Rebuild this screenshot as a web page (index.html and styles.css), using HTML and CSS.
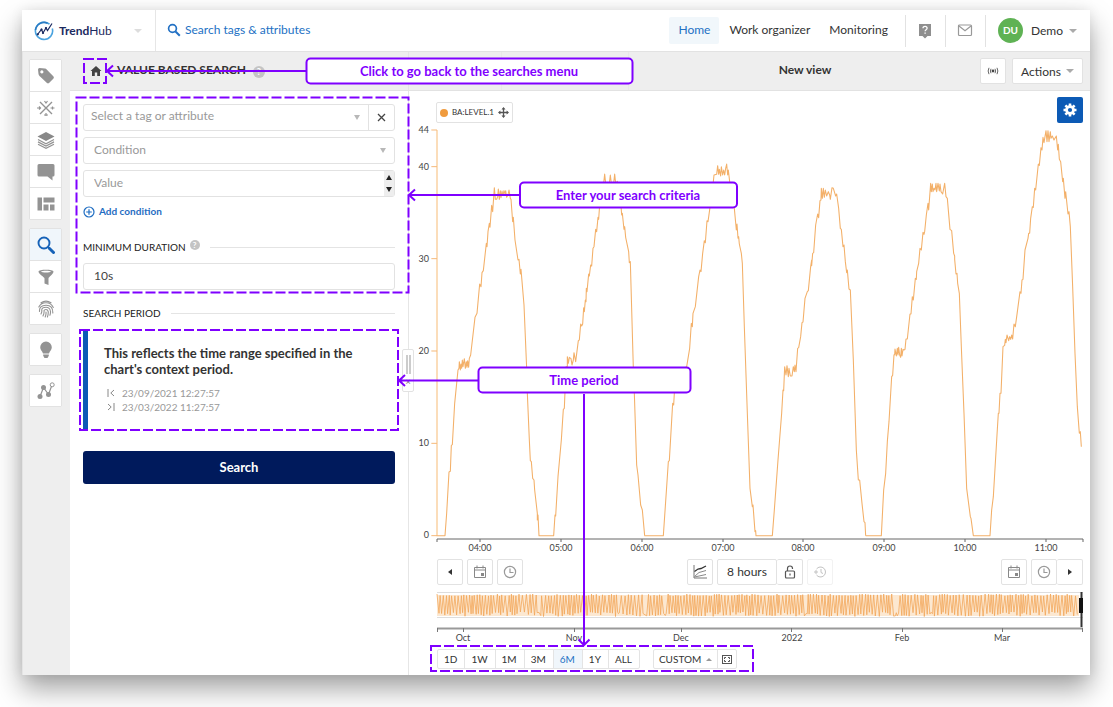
FILE: index.html
```html
<!DOCTYPE html>
<html lang="en">
<head>
<meta charset="utf-8">
<meta name="viewport" content="width=device-width, initial-scale=1">
<title>TrendHub</title>
<link rel="stylesheet" href="styles.css">
</head>
<body>
<div class="app">
  <header class="topbar">
    <button class="brand" type="button">
      <svg width="20" height="20" viewBox="0 0 20 20" fill="none">
        <path d="M15.500 3.200A8.600 8.600 0 1 0 18.300 7.500" stroke="#4aa3df" stroke-width="1.600"/>
        <path d="M1.500 9A8.600 8.600 0 0 1 13.500 2.200" stroke="#2b7cc4" stroke-width="1.600"/>
        <path d="M3.500 13.500L7.500 8.500L9 12L12 7L13.500 9.500L18 2.500" stroke="#1b2a60" stroke-width="1.200"/>
        <circle cx="7.500" cy="8.500" r="1.100" fill="#1b2a60"/><circle cx="12" cy="7" r="1.100" fill="#1b2a60"/><circle cx="9" cy="12" r="1.100" fill="#1b2a60"/><circle cx="3.800" cy="13.300" r="1.100" fill="#1b2a60"/>
      </svg>
      <span class="brand-name"><b>Trend</b>Hub</span>
      <span class="caret caret-light"></span>
    </button>
    <button class="global-search" type="button">
      <svg width="14" height="14" viewBox="0 0 14 14" fill="none" stroke="#2371c4"><circle cx="5.500" cy="5.500" r="3.900" stroke-width="1.700"/><path d="M8.500 8.500L12.800 12.800" stroke-width="2"/></svg>
      Search tags &amp; attributes
    </button>
    <nav class="nav">
      <a class="active" href="#home">Home</a>
      <a href="#organizer">Work organizer</a>
      <a href="#monitoring">Monitoring</a>
    </nav>
    <button class="icon-tab" type="button" aria-label="Help">
      <svg width="14" height="16" viewBox="0 0 14 16"><path d="M1 1h12v12h-3.500L7 15.500l-2.500-2.500H1z" fill="#8f8f8f"/><path d="M5 5.200c0-2.600 4.100-2.500 4.100 0 0 1.600-2 1.500-2 3.100" fill="none" stroke="#fff" stroke-width="1.300"/><path d="M6.400 9.500h1.400v1.300H6.400z" fill="#fff"/></svg>
    </button>
    <button class="icon-tab" type="button" aria-label="Messages">
      <svg width="16" height="13" viewBox="0 0 16 13" fill="none" stroke="#999" stroke-width="1.200"><rect x="1.500" y="1" width="13" height="10.500" rx="1"/><path d="M2 2l6 4.800L14 2"/></svg>
    </button>
    <button class="user" type="button"><span class="avatar">DU</span>Demo<span class="caret"></span></button>
  </header>

  <div class="workspace">
    <aside class="rail">
      <div class="rail-group">
        <button type="button" aria-label="Tags"><svg viewBox="0 0 18 18"><path fill-rule="evenodd" d="M1 2.500Q1 1 2.500 1L8 1.500Q9 1.600 9.700 2.400L16.500 9.500Q17.300 10.500 16.500 11.500L12 16Q11 16.800 10 16L2.500 9Q1.700 8.200 1.500 7zM4.800 3.300a1.600 1.600 0 1 0 .1 0z" fill="#939393"/></svg></button>
        <button type="button" aria-label="Scatter"><svg viewBox="0 0 18 18" fill="none" stroke="#939393" stroke-width="1.400"><path d="M3 3l12 12M15 3L3 15"/><path d="M7.500 2l1.500 2 1.500-2M0 9h4M2 7.500L3.500 9 2 10.500M13.500 9h4M15.500 7.500v3M7 16h4M9 14v3" stroke-width="1.200"/></svg></button>
        <button type="button" aria-label="Layers"><svg viewBox="0 0 18 18"><path d="M9 1l8.500 4.500L9 10 .5 5.500z" fill="#888"/><path d="M1 8.500l8 4.200 8-4.200M1 10.900l8 4.200 8-4.200M1 13.300l8 4 8-4" fill="none" stroke="#939393" stroke-width="1.200"/></svg></button>
        <button type="button" aria-label="Comments"><svg viewBox="0 0 18 18"><path d="M2 1h14q1.500 0 1.500 1.500v9.500q0 1.500-1.500 1.500h-.5v4l-5-4H2Q.5 13.500.5 12V2.500Q.5 1 2 1z" fill="#939393"/></svg></button>
        <button type="button" aria-label="Dashboards"><svg viewBox="0 0 18 18" fill="#939393"><path d="M.5 2.500h4.500v13H.5zM6.500 2.500h11v5h-11zM6.500 9.500h5v6h-5zM13 9.500h4.500v6H13z"/></svg></button>
      </div>
      <div class="rail-group">
        <button class="selected" type="button" aria-label="Search"><svg viewBox="0 0 18 18" fill="none" stroke="#1662b8"><circle cx="7" cy="7" r="5.500" stroke-width="1.900"/><path d="M11 11l2 2" stroke-width="2"/><path d="M12.500 12.500l4 4" stroke-width="3" stroke-linecap="round"/></svg></button>
        <button type="button" aria-label="Filter"><svg viewBox="0 0 18 18"><path fill-rule="evenodd" d="M1.500 3.500C1.500 1 16.500 1 16.500 3.500 16.500 6 11.500 9 11.500 10.500V17l-4-1.500v-5C7.500 9 1.500 6 1.500 3.500zM4 3.500c1 1.300 9 1.300 10 0-1-1-9-1-10 0z" fill="#939393"/></svg></button>
        <button type="button" aria-label="Fingerprint"><svg viewBox="0 0 18 18" fill="none" stroke="#939393" stroke-width="1.100" stroke-linecap="round"><path d="M4 2.800Q9-.5 14 2.800M1.800 7Q4 2.800 9 2.800T16.300 7.500M2.500 11.500Q2 5.300 9 5.200T15.800 13M4 14q1.200-2.300.7-4Q5 7.300 9 7.300t4.500 4.200q.1 2-.6 3.800M6 16q1.400-3 1-5.300Q7.300 9.500 9 9.500t2.200 2q.3 2.500-.8 5.500M9 12q.3 2.300-.8 5"/></svg></button>
      </div>
      <div class="rail-group">
        <button type="button" aria-label="Insights"><svg viewBox="0 0 18 18" fill="#939393"><path d="M9 .5a5.800 5.800 0 0 1 5.800 5.800c0 2.700-2 3.700-2.800 6.200H6C5.200 10 3.200 9 3.200 6.300A5.800 5.800 0 0 1 9 .5zM6.200 13.500h5.600v1.300L10.500 17h-3l-1.300-2.200z"/></svg></button>
      </div>
      <div class="rail-group">
        <button type="button" aria-label="Network"><svg viewBox="0 0 18 18" fill="#939393"><path d="M3 14.500L6.500 5.500 11.500 12.500 15 3" fill="none" stroke="#939393" stroke-width="1.200"/><circle cx="3" cy="14.500" r="2.500"/><circle cx="6.500" cy="5.500" r="2.500"/><circle cx="11.500" cy="12.500" r="2.500"/><circle cx="15.200" cy="2.800" r="2" fill="#fff" stroke="#939393"/></svg></button>
      </div>
    </aside>

    <main class="content">
      <div class="viewbar">
        <div class="viewbar-left">
          <a class="home" href="#searches" aria-label="Back to the searches menu"><svg width="12" height="12" viewBox="0 0 12 12"><path d="M6 1l5.500 5H10v5H7.200V7.500H4.800V11H2V6H.5z" fill="#444"/></svg></a>
          <h1>VALUE BASED SEARCH</h1>
          <span class="help">?</span>
        </div>
        <div class="viewbar-slot"></div>
        <div class="viewbar-slot wide"></div>
        <div class="viewbar-right">
          <h2>New view</h2>
          <button class="box-button" type="button" aria-label="Live"><svg width="12" height="10" viewBox="0 0 12 10" fill="none" stroke="#666"><circle cx="6" cy="5" r="1.400" fill="#444" stroke="none"/><path d="M4 2.800Q2.800 5 4 7.200M2 1.800Q.3 5 2 8.200M8 2.800Q9.200 5 8 7.200M10 1.800Q11.700 5 10 8.200"/></svg></button>
          <button class="box-button actions" type="button">Actions<span class="caret"></span></button>
        </div>
      </div>

      <div class="panes">
        <form class="search-pane">
          <div class="fields">
            <div class="field">
              <select aria-label="Tag or attribute"><option>Select a tag or attribute</option></select>
              <span class="drop"></span>
              <button class="clear" type="button" aria-label="Clear"><svg width="9" height="9" viewBox="0 0 9 9" stroke="#444" stroke-width="1.300"><path d="M1 1l7 7M8 1L1 8"/></svg></button>
            </div>
            <div class="field">
              <select class="inset" aria-label="Condition"><option>Condition</option></select>
              <span class="drop"></span>
            </div>
            <div class="field">
              <input class="inset" type="text" placeholder="Value" aria-label="Value">
              <span class="stepper"><button type="button" aria-label="Increase"></button><button class="down" type="button" aria-label="Decrease"></button></span>
            </div>
          </div>
          <button class="add" type="button"><svg width="12" height="12" viewBox="0 0 12 12" fill="none" stroke="#1f6dc2" stroke-width="1.200"><circle cx="6" cy="6" r="5"/><path d="M6 3.200v5.600M3.200 6h5.600"/></svg>Add condition</button>
          <div class="section"><label for="duration">MINIMUM DURATION</label><span class="help small">?</span></div>
          <div class="field"><input id="duration" class="inset" type="text" value="10s"></div>
          <div class="section period-title"><h3>SEARCH PERIOD</h3></div>
          <section class="period">
            <p>This reflects the time range specified in the chart's context period.</p>
            <ul>
              <li><svg width="8" height="8" viewBox="0 0 8 8" fill="none" stroke="#888"><path d="M1 0v8M7 1L3.800 4 7 7"/></svg>23/09/2021 12:27:57</li>
              <li><svg width="8" height="8" viewBox="0 0 8 8" fill="none" stroke="#888"><path d="M7 0v8M1 1l3.200 3L1 7"/></svg>23/03/2022 11:27:57</li>
            </ul>
          </section>
          <button class="submit" type="submit">Search</button>
          <div class="handle"><span></span><small>×</small></div>
        </form>

        <section class="chart-pane">
          <div class="legend-row">
            <button class="legend" type="button"><i></i>BA:LEVEL.1<svg width="11" height="11" viewBox="0 0 11 11"><path d="M5.500 1v9M1 5.500h9" stroke="#555" stroke-width="1.300"/><path d="M5.500 0l2 2.400h-4zM5.500 11l2-2.400h-4zM0 5.500l2.400-2v4zM11 5.500l-2.400-2v4z" fill="#555"/></svg></button>
            <button class="settings" type="button" aria-label="Settings"><svg width="14" height="14" viewBox="0 0 14 14"><g stroke="#fff" stroke-width="2.600"><path d="M7 .5v13M.5 7h13M2.400 2.400l9.200 9.200M11.600 2.400l-9.200 9.200"/></g><circle cx="7" cy="7" r="4.800" fill="#fff"/><circle cx="7" cy="7" r="2.100" fill="#0c5ab5"/></svg></button>
          </div>

          <svg class="chart" viewBox="0 0 673 432" role="img" aria-label="BA:LEVEL.1 over 8 hours">
            <g transform="translate(3 -3) scale(.33333)" fill="none" stroke-linejoin="round">
              <path d="M51 30V1247" stroke="#fbd7ad" stroke-width="5"/>
              <path d="M34 30H51M34 140H51M34 416H51M34 693H51M34 970H51M34 1247H51" stroke="#f5b878" stroke-width="3"/>
              <g stroke="#f3b069" stroke-width="3.200">
                <polyline points="50,1247 75,1247 80,1180 87,1056 91,1054 94,976 97,974 104,850 107,820 114,750 117,745 118,725 121,750 123,732 125,745 127,720 129,740 133,716 136,745 139,725 141,742 143,722 146,742 148,715 152,705 165,592 171,580 179,492 183,500 186,458 190,452 199,370 201,380 204,335 208,310 210,322 215,256 218,275 223,203 226,238 230,238 233,230 235,207 238,238 241,212 243,233 246,213 249,226 252,212 255,222 257,212 260,232 264,225 267,210 271,235 273,238 278,305 280,292 285,360 294,420 297,418 301,462 303,448 312,555 320,745 322,820 328,960 331,1022 334,1025 338,1075 342,1080 344,1110 352,1180 352,1200 354,1185 357,1247 401,1247 405,1185 407,1188 414,1070 424,960 430,868 433,865 438,740 442,740 442,710 445,730 448,712 453,716 456,735 460,720 462,698 467,725 475,662 478,660 482,612 485,618 488,612 491,563 493,575 496,540 498,545 499,505 501,515 506,462 508,468 512,435 515,438 519,385 522,380 527,328 530,335 534,292 536,298 540,240 551,190 554,162 557,190 568,190 571,165 574,190 581,190 584,162 587,190 592,184 600,215 605,285 607,280 612,328 614,320 617,352 626,395 628,428 631,425 640,745 643,820 650,1035 654,1065 662,1155 667,1170 674,1247"/>
                <polyline transform="translate(660 0)" points="13,1247 70,1247 80,1100 85,1025 88,1022 98,850 101,855 103,820 110,760 140,740 149,685 154,610 157,620 159,580 166,560 176,470 180,450 183,455 188,400 193,362 196,368 201,302 204,305 210,262 220,185 222,165 230,163 233,137 236,163 238,148 242,168 244,140 248,165 251,150 254,165 257,145 260,132 263,165 265,150 269,185 283,265 289,330 291,312 294,355 296,350 298,372 304,400 307,430 313,620 322,880 330,1105 337,1160 339,1155 345,1235 347,1232 348,1247 397,1247 403,1170 414,1020 425,880 429,810 431,812 434,740 438,765 441,737 445,770 447,745 451,768 456,768 460,740 463,755 465,735 468,755 473,685 476,683 482,650 486,608 489,606 495,535 502,515 505,512 512,440 515,420 515,437 518,400 521,398 527,315 533,282 536,293 540,242 543,240 544,205 547,235 550,205 553,232 556,210 560,228 565,215 569,225 571,238 576,203 580,205 587,228 590,222 596,265 601,325 604,328 609,380 612,375 616,425 620,458 622,450 627,507 631,510 640,720 649,990 655,1080 659,1080 666,1150 672,1205 675,1208 677,1247"/>
                <polyline transform="translate(1320 0)" points="17,1247 64,1247 71,1110 77,1060 82,965 87,905 95,770 98,766 102,704 104,704 105,687 109,708 112,685 114,705 116,682 119,705 122,712 124,685 126,708 129,688 132,690 135,688 138,657 142,657 150,582 153,582 157,530 160,540 166,475 169,478 170,455 176,430 180,385 184,390 189,337 192,343 194,335 199,285 204,250 206,270 212,190 214,215 217,192 219,215 222,205 225,210 228,190 230,215 234,190 238,213 240,192 243,215 248,222 254,190 258,230 262,235 270,328 275,332 281,400 284,408 284,418 288,462 291,460 293,490 298,520 304,680 312,880 320,1105 331,1190 333,1195 340,1247 390,1247 395,1170 400,1130 411,945 415,880 417,880 420,820 423,820 429,680 434,676 436,658 438,668 441,645 446,662 449,650 452,658 455,645 458,657 462,612 466,620 473,568 480,515 483,520 486,480 489,478 495,390 504,355 506,340 509,340 512,295 517,260 520,262 524,205 527,210 535,132 538,136 543,83 546,90 549,52 552,68 558,32 561,65 564,32 567,65 571,35 573,55 577,48 582,60 589,48 593,90 595,73 598,118 602,125 608,185 610,175 615,235 617,215 624,282 627,275 631,320 638,500 645,700 652,860 658,940 661,935 664,980"/>
              </g>
            </g>
            <path d="M20 419V416H666V419M63 416v3M144 416v3M225 416v3M306 416v3M386 416v3M467 416v3M548 416v3M629 416v3" fill="none" stroke="#666"/>
            <g class="axis end"><text x="12" y="10">44</text><text x="12" y="47">40</text><text x="12" y="139">30</text><text x="12" y="231">20</text><text x="12" y="323">10</text><text x="12" y="415">0</text></g>
            <g class="axis"><text x="63" y="428">04:00</text><text x="144" y="428">05:00</text><text x="225" y="428">06:00</text><text x="306" y="428">07:00</text><text x="386" y="428">08:00</text><text x="467" y="428">09:00</text><text x="548" y="428">10:00</text><text x="629" y="428">11:00</text></g>
          </svg>

          <div class="timebar">
            <div class="tools">
              <button class="box-button" type="button" aria-label="Previous"><span class="left"></span></button>
              <button class="box-button" type="button" aria-label="Start date"><svg class="tool-icon"><use href="#calendar"/></svg></button>
              <button class="box-button" type="button" aria-label="Start time"><svg class="tool-icon"><use href="#clock"/></svg></button>
            </div>
            <div class="tools">
              <button class="box-button" type="button" aria-label="Chart mode"><svg class="tool-icon" viewBox="0 0 14 14" fill="none"><path d="M1 0v13h13" stroke="#777"/><path d="M1.500 6.500L5 4l3-.5L13 1" stroke="#333" stroke-width="1.300"/><path d="M1.500 11.500L6 7.500 13 5.500M1.500 12L13 9.500" stroke="#888"/></svg></button>
              <div class="joined">
                <button class="box-button hours" type="button">8 hours</button>
                <button class="box-button" type="button" aria-label="Lock"><svg class="tool-icon" viewBox="0 0 14 14" fill="none" stroke="#555" stroke-width="1.200"><rect x="2.500" y="6" width="9" height="7" rx="1"/><path d="M4.500 6V3.500a2.500 2.500 0 0 1 5 0V4M7 8.500v2"/></svg></button>
              </div>
              <button class="box-button" type="button" aria-label="History" disabled><svg class="tool-icon" viewBox="0 0 14 14" fill="none" stroke="#c2c2c2"><path d="M3.500 4A5 5 0 1 1 3.500 10M1 7h4M3 5v4M8 4v3.500l2 1"/></svg></button>
            </div>
            <div class="tools">
              <button class="box-button" type="button" aria-label="End date"><svg class="tool-icon"><use href="#calendar"/></svg></button>
              <div class="joined">
                <button class="box-button" type="button" aria-label="End time"><svg class="tool-icon"><use href="#clock"/></svg></button>
                <button class="box-button" type="button" aria-label="Next"><span class="right"></span></button>
              </div>
            </div>
          </div>

          <svg class="overview" viewBox="0 0 673 54" role="img" aria-label="BA:LEVEL.1 overview">
            <path d="M20 2.500H666M20 27.500H666" stroke="#ddd"/>
            <rect x="20" y="5" width="642" height="21" fill="#fad9b3" opacity=".6"/>
            <polyline id="wave" fill="none" stroke="#f2a75a" stroke-width=".8"/>
            <path d="M20 38.500H666" stroke="#999" stroke-width="2"/>
            <path d="M20.500 38v4M46.500 38v4M157.500 38v4M264.500 38v4M374.500 38v4M485.500 38v4M585.500 38v4M665.500 38v4" stroke="#777"/>
            <path d="M664.500 2v35" stroke="#333" stroke-width="2"/><rect x="662" y="8" width="4" height="15" fill="#111"/>
            <g class="axis"><text x="46" y="51">Oct</text><text x="157" y="51">Nov</text><text x="264" y="51">Dec</text><text x="375" y="51">2022</text><text x="485" y="51">Feb</text><text x="585" y="51">Mar</text></g>
          </svg>

          <div class="ranges">
            <div class="range-group">
              <button type="button">1D</button><button type="button">1W</button><button type="button">1M</button><button type="button">3M</button><button class="selected" type="button">6M</button><button type="button">1Y</button><button type="button">ALL</button>
            </div>
            <div class="range-group">
              <button class="custom" type="button">CUSTOM<span class="caret up"></span></button>
              <button class="fit" type="button" aria-label="Fit"><svg width="10" height="9" viewBox="0 0 10 9" fill="none" stroke="#555"><rect x=".5" y=".5" width="9" height="8"/><path d="M2.500 4V2.500H4M6 2.500h1.500V4M7.500 5v1.500H6M4 6.500H2.500V5"/></svg></button>
            </div>
          </div>
        </section>
      </div>
    </main>
  </div>

  <svg class="guide" width="1068" height="665" viewBox="0 0 1068 665">
    <g class="dashed">
      <rect x="62" y="49" width="22" height="24"/>
      <rect x="54.500" y="87.500" width="332" height="195"/>
      <rect x="58" y="320" width="318" height="100"/>
      <rect x="409" y="636" width="322" height="25"/>
    </g>
    <path d="M285 61H85M91 55.500L85 61l6 5.500M498 185H387M393 179.500L387 185l6 5.500M457 370.500H377M383 365L377 370.500l6 5.500M562 384V635M556.500 629.500L562 635l5.500-5.500"/>
    <g class="callouts">
      <rect x="284.500" y="48.500" width="326" height="25" rx="4"/>
      <rect x="498" y="172.500" width="217" height="25" rx="4"/>
      <rect x="456.500" y="357.500" width="212" height="25" rx="4"/>
    </g>
    <text x="447" y="66">Click to go back to the searches menu</text>
    <text x="606" y="190">Enter your search criteria</text>
    <text x="562" y="375">Time period</text>
  </svg>
</div>

<svg class="symbols" width="0" height="0" aria-hidden="true">
  <symbol id="calendar" viewBox="0 0 14 14"><path d="M1.500 2.500h11v10h-11zM1.500 5h11M4 .5v3M10 .5v3" fill="none" stroke="#888"/><path d="M8 8h3v3H8z" fill="#888"/></symbol>
  <symbol id="clock" viewBox="0 0 14 14"><g fill="none" stroke="#999" stroke-width="1.200"><circle cx="7" cy="7" r="5.600"/><path d="M7 3.500V7.500h3.500"/></g></symbol>
</svg>
<script src="overview.js"></script>
</body>
</html>
```
FILE: overview.js
```js
// Draws the six-month signal: a fast cycle with a few slow dips.
const dips = [123, 201, 229, 247, 389, 479, 515];
let seed = 7;
const random = () => (seed = (seed * 16807) % 2147483647) / 2147483647;
const points = [];
let high = true;
for (let x = 20; x < 661; x += 0.8 + random() * 1.3) {
  const dip = dips.some(d => Math.abs(d - x) < 1.5);
  const y = dip ? 22 + random() * 4 : high ? 4 + random() * 2 : 22 + random() * 4.5;
  points.push(x.toFixed(1) + ',' + y.toFixed(1));
  high = !high;
}
document.getElementById('wave').setAttribute('points', points.join(' '));
```
FILE: styles.css
```css
* { box-sizing: border-box; }
body {
  margin: 0;
  padding: 10px 23px 32px 22px;
  background: #fff;
  color: #333;
  font: 12px/15px Lato, "Liberation Sans", sans-serif;
}
h1, h2, h3, p, ul { margin: 0; padding: 0; font-size: inherit; }
button, input, select { margin: 0; padding: 0; border: 0; background: none; color: inherit; font: inherit; }
a { color: inherit; text-decoration: none; }
svg { display: block; flex: none; }

.app {
  position: relative;
  display: flex;
  flex-direction: column;
  min-height: calc(100vh - 42px);
  background: #fff;
  box-shadow: 0 14px 26px rgba(0, 0, 0, .36), 0 0 12px rgba(0, 0, 0, .08);
}

.caret { border: 4px solid transparent; border-top-color: #aaa; border-bottom: 0; }
.caret-light { border-top-color: #ddd; }
.caret.up { border: 3px solid transparent; border-bottom-color: #999; border-top: 0; }

/* Top bar */
.topbar { display: flex; align-items: center; height: 42px; border-bottom: 1px solid #e2e2e2; }
.brand { display: flex; align-items: center; width: 134px; height: 41px; padding: 0 13px 0 12px; border-right: 1px solid #e6e6e6; color: #1b2a60; }
.brand-name { margin: 0 auto 0 5px; }
.global-search { display: flex; align-items: center; gap: 4px; padding: 0 0 2px 11px; color: #2371c4; }
.nav { display: flex; align-items: center; gap: 1px; margin-left: auto; padding-right: 8px; }
.nav a { padding: 5px 9px 7px; border-radius: 2px; }
.nav .active { background: #f1f7fb; color: #2371c4; }
.icon-tab { display: flex; align-items: center; justify-content: center; width: 40px; height: 32px; border-left: 1px solid #e2e2e2; }
.user { display: flex; align-items: center; height: 32px; padding: 0 13px 0 12px; border-left: 1px solid #e2e2e2; }
.avatar { width: 25px; height: 25px; margin-right: 8px; border-radius: 50%; background: #5fb254; color: #fff; font-size: 10px; font-weight: 700; line-height: 25px; }
.user .caret { margin-left: 6px; }

/* Tool rail */
.workspace { display: flex; flex: 1; background: #eee; }
.rail { display: flex; flex: none; flex-direction: column; gap: 7px; width: 48px; padding: 7px 8px 8px 6px; border-left: 1px solid #e4e4e4; }
.rail-group { display: grid; gap: 1px; border: 1px solid #e2e2e2; border-radius: 2px; background: #e2e2e2; }
.rail-group button { display: flex; align-items: center; justify-content: center; height: 31px; background: #fff; }
.rail-group .selected { background: #f0f6fb; }
.rail-group:nth-child(n + 2) { margin-top: 1px; }
.rail-group svg { width: 18px; height: 18px; }

/* View bar */
.content { display: flex; flex: 1; flex-direction: column; min-width: 0; }
.viewbar { display: flex; height: 39px; border-bottom: 1px solid #e2e2e2; }
.viewbar-left { display: flex; align-items: center; width: 339px; padding: 0 0 3px 20px; border-right: 1px solid #e4e4e4; }
.home { padding-top: 3px; }
h1 { margin: 0 7px 0 15px; font-size: 12px; }
h2 { margin-right: auto; margin-left: auto; font-size: 12px; }
.viewbar-slot { width: 93px; border-right: 1px solid #e8e8e8; }
.viewbar-slot.wide { width: 127px; }
.viewbar-right { display: flex; flex: 1; align-items: center; gap: 6px; padding: 0 7px; }
.viewbar-right h2 { padding-bottom: 3px; }
.help { width: 12px; height: 12px; margin-top: 4px; border-radius: 50%; background: #c4c4c4; color: #fff; font-size: 9px; font-weight: 700; line-height: 12px; text-align: center; }
.help.small { width: 10px; height: 10px; margin: 0 10px 5px 4px; font-size: 8px; line-height: 10px; }
.box-button { display: flex; align-items: center; justify-content: center; width: 26px; height: 26px; border: 1px solid #e2e2e2; border-radius: 2px; background: #fff; }
.actions { gap: 5px; width: 71px; }

/* Search form */
.panes { display: flex; flex: 1; background: #fff; }
.search-pane { position: relative; flex: none; width: 339px; padding: 13px 13px 20px; border-right: 1px solid #e6e6e6; }
.fields { display: grid; gap: 6px; }
.field { display: flex; align-items: center; height: 27px; border: 1px solid #e2e2e2; border-radius: 3px; color: #444; }
.field select, .field input { flex: 1; min-width: 0; height: 25px; padding: 0 7px 4px; outline: 0; appearance: none; }
.field .inset { padding: 0 10px 2px; }
.field select { color: #999; }
.field input::placeholder { color: #999; opacity: 1; }
.drop { margin-right: 8px; border: 3px solid transparent; border-top: 5px solid #b8b8b8; border-bottom: 0; }
.clear { display: grid; place-items: center; width: 26px; height: 25px; border-left: 1px solid #e2e2e2; }
.stepper { display: grid; width: 10px; height: 25px; background: #eee; }
.stepper button { display: grid; place-items: center; }
.stepper button::before { content: ""; border: 3px solid transparent; border-top: 0; border-bottom: 5px solid #222; }
.stepper .down::before { border-top: 5px solid #222; border-bottom: 0; }
.add { display: flex; align-items: center; gap: 4px; margin-top: 7px; color: #1f6dc2; font-size: 10px; font-weight: 700; }
.section { display: flex; align-items: center; height: 14px; margin: 21px 0 9px; color: #222; font-size: 10px; }
.section::after { content: ""; flex: 1; height: 1px; background: #e4e4e4; }
.period-title { margin-top: 16px; margin-bottom: 10px; }
.section h3 { margin-right: 10px; font-weight: 400; }
.period { height: 101px; padding: 15px 12px 12px 16px; border-left: 5px solid #0c5ab5; font-size: 13px; line-height: 16px; }
.period p { font-weight: 700; }
.period ul { margin-top: 9px; list-style: none; color: #999; font-size: 10px; line-height: 14px; }
.period li { display: flex; align-items: center; gap: 7px; padding-left: 3px; }
.submit { width: 100%; height: 33px; margin-top: 20px; border-radius: 3px; background: #001a5c; color: #fff; font-size: 13px; font-weight: 700; }
.handle { position: absolute; top: 258px; right: -6px; width: 12px; height: 43px; padding-top: 5px; border: 1px solid #e2e2e2; border-radius: 2px; background: #fff; }
.handle span { display: block; width: 5px; height: 19px; margin: 0 auto 3px; border: 2px solid #ccc; border-width: 0 2px; }
.handle small { display: block; color: #777; font-size: 9px; line-height: 9px; text-align: center; }

/* Chart */
.chart-pane { flex: 1; min-width: 0; padding: 6px 0 6px 8px; }
.legend-row { display: flex; align-items: flex-end; justify-content: space-between; padding: 0 7px 0 19px; }
.legend { display: flex; align-items: center; gap: 4px; height: 21px; padding: 0 3px; border: 1px solid #e2e2e2; border-radius: 2px; font-size: 8px; }
.legend i { width: 8px; height: 8px; border-radius: 50%; background: #f09b3e; }
.settings { display: grid; place-items: center; width: 26px; height: 26px; border-radius: 2px; background: #0c5ab5; }
.chart, .overview { width: 100%; height: auto; }
.axis text { fill: #444; font-size: 9px; text-anchor: middle; }
.axis.end text { text-anchor: end; }
.timebar { display: flex; padding: 4px 7px 5px 20px; }
.tools { display: flex; flex: 1; gap: 4px; }
.tools:nth-child(2) { flex: none; }
.tools:last-child { justify-content: flex-end; }
.joined { display: flex; }
.joined .box-button + .box-button { border-left: 0; }
.box-button:disabled { border-color: #f2f2f2; }
.tool-icon { width: 14px; height: 14px; }
.hours { width: 60px; padding-bottom: 2px; }
.left, .right { border: 3px solid transparent; border-right: 4px solid #333; border-left: 0; }
.right { border-right: 0; border-left: 4px solid #333; }
.ranges { display: flex; gap: 13px; padding: 5px 7px 0 20px; }
.range-group { display: flex; height: 20px; border: 1px solid #e4e4e4; border-radius: 2px; font-size: 10px; }
.range-group button { padding: 0 7px 0 6px; }
.range-group button + button { border-left: 1px solid #e4e4e4; }
.range-group .selected { background: #f0f6fb; color: #2371c4; }
.range-group .custom { display: flex; align-items: center; gap: 5px; padding: 0 5px; }
.range-group .fit { display: grid; place-items: center; padding: 0 4px; }

/* Walkthrough annotations, laid over the application */
.guide { position: absolute; top: 0; left: 0; pointer-events: none; fill: none; stroke: #7f00ff; stroke-width: 2; }
.dashed { stroke-dasharray: 10 3; }
.callouts { fill: #fff; }
.guide text { fill: #7f00ff; stroke: none; font-size: 13px; font-weight: 700; text-anchor: middle; }
.symbols { position: absolute; }
```
